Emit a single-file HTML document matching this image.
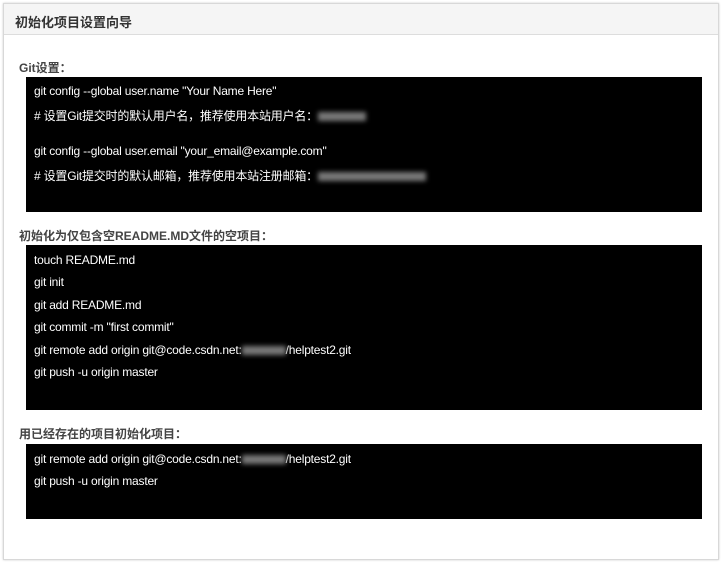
<!DOCTYPE html>
<html><head><meta charset="utf-8"><style>
*{margin:0;padding:0;box-sizing:border-box}
body{width:723px;height:563px;background:#fff;font-family:"Liberation Sans","Noto Sans CJK SC",sans-serif;position:relative;overflow:hidden}
.box{position:absolute;left:3px;top:3px;width:716px;height:557px;border:1px solid #d8d8d8;box-shadow:0 0 2px #ccc}
.hd{position:absolute;left:0;top:0;right:0;height:31px;background:#f5f5f5;border-bottom:1px solid #ddd;font-size:13px;font-weight:bold;color:#333;padding:8px 0 0 11px}
.lbl{position:absolute;left:15px;font-size:12px;font-weight:bold;color:#444}
.code{position:absolute;left:22px;width:676px;background:#000;color:#fff;font-size:12px;letter-spacing:-0.2px}
.code div{position:absolute;left:8px;white-space:nowrap}
.bl{display:inline-block;width:48px;height:9px;background:#777;filter:blur(2.5px);vertical-align:middle}
</style></head><body>
<div class="box">
<div class="hd">初始化项目设置向导</div>
<div class="lbl" style="top:55px">Git设置：</div>
<div class="code" style="top:73px;height:135px">
<div style="top:7px">git config --global user.name "Your Name Here"</div>
<div style="top:30px"># 设置Git提交时的默认用户名，推荐使用本站用户名：<span class="bl"></span></div>
<div style="top:67px">git config --global user.email "your_email@example.com"</div>
<div style="top:90px"># 设置Git提交时的默认邮箱，推荐使用本站注册邮箱：<span class="bl" style="width:108px"></span></div>
</div>
<div class="lbl" style="top:223px">初始化为仅包含空README.MD文件的空项目：</div>
<div class="code" style="top:241px;height:165px">
<div style="top:8px">touch README.md</div>
<div style="top:30px">git init</div>
<div style="top:53px">git add README.md</div>
<div style="top:75px">git commit -m "first commit"</div>
<div style="top:98px">git remote add origin git@code.csdn.net:<span class="bl" style="width:44px"></span>/helptest2.git</div>
<div style="top:120px">git push -u origin master</div>
</div>
<div class="lbl" style="top:421px">用已经存在的项目初始化项目：</div>
<div class="code" style="top:440px;height:75px">
<div style="top:8px">git remote add origin git@code.csdn.net:<span class="bl" style="width:44px"></span>/helptest2.git</div>
<div style="top:30px">git push -u origin master</div>
</div>
</div>
</body></html>
